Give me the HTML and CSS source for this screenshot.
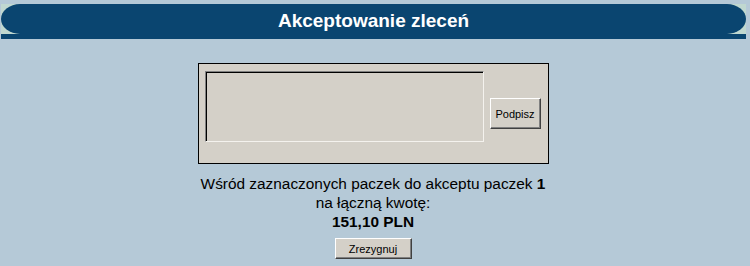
FILE: index.html
```html
<!DOCTYPE html>
<html lang="pl">
<head>
<meta charset="utf-8">
<title>Akceptowanie zleceń</title>
<link rel="stylesheet" href="styles.css">
</head>
<body>
<div class="page">
  <header class="banner">
    <div class="banner-top">
      <div class="cap cap-left"><div class="cap-fill"></div></div>
      <h1 class="title">Akceptowanie zleceń</h1>
      <div class="cap cap-right"><div class="cap-fill"></div></div>
    </div>
    <div class="banner-strip"></div>
  </header>
  <main class="content">
    <div class="sign-box">
      <textarea class="sign-area" readonly></textarea>
      <button class="btn btn-sign" type="button">Podpisz</button>
    </div>
    <p class="summary">Wśród zaznaczonych paczek do akceptu paczek <b>1</b><br>na łączną kwotę:<br><b>151,10 PLN</b></p>
    <button class="btn btn-cancel" type="button">Zrezygnuj</button>
  </main>
</div>
</body>
</html>
```

FILE: styles.css
```css
body {
  margin: 0;
  background: #b5c9d7;
  font-family: "Liberation Sans", Arial, sans-serif;
  color: #000;
}

.page {
  width: 746px;
  padding-top: 4px;
}

.banner {
  margin-left: 1px;
  width: 745px;
}

.banner-top {
  display: flex;
  height: 30px;
  background: #0a4570;
}

.cap {
  flex: none;
  width: 19px;
  background: #c0d8d0;
}

.cap-fill {
  height: 100%;
  background: #0a4570;
}

.cap-left .cap-fill {
  border-radius: 19px 0 0 19px / 15px 0 0 15px;
}

.cap-right .cap-fill {
  border-radius: 0 19px 19px 0 / 0 15px 15px 0;
}

.title {
  flex: 1;
  box-sizing: border-box;
  height: 30px;
  margin: 0;
  padding-top: 4px;
  color: #fff;
  font-size: 19px;
  font-weight: bold;
  line-height: 26px;
  text-align: center;
}

.banner-strip {
  height: 5px;
  background: #0a4570;
}

.content {
  display: flex;
  flex-direction: column;
  align-items: center;
  padding-top: 24px;
}

.sign-box {
  display: flex;
  align-items: center;
  gap: 6px;
  box-sizing: border-box;
  width: 351px;
  height: 101px;
  padding: 0 7px 0 6px;
  border: 1px solid #000;
  background: #d4d0c8;
}

.sign-area {
  align-self: flex-start;
  box-sizing: border-box;
  width: 279px;
  height: 71px;
  margin: 7px 0 0;
  padding: 0;
  border: 1px solid;
  border-color: #808080 #f4f2ee #f4f2ee #808080;
  box-shadow: inset 1px 1px #000, inset -1px -1px #d4d0c8;
  background: #d4d0c8;
  resize: none;
  outline: none;
}

.btn {
  box-sizing: border-box;
  padding: 0;
  border: 1px solid;
  border-color: #fff #404040 #404040 #fff;
  box-shadow: inset -1px -1px #808080;
  background: #d4d0c8;
  color: #000;
  font-family: "Liberation Sans", Arial, sans-serif;
  font-size: 11px;
}

.btn-sign {
  width: 51px;
  height: 31px;
}

.summary {
  margin: 10px 0 0;
  font-size: 15.4px;
  line-height: 19px;
  text-align: center;
}

.btn-cancel {
  width: 77px;
  height: 21px;
  margin-top: 7px;
}
```
